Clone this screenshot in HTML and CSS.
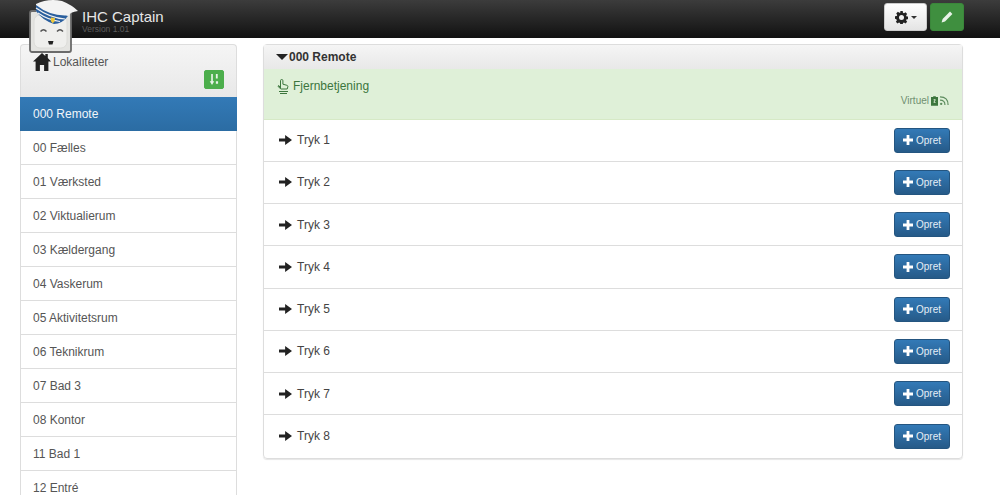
FILE: index.html
```html
<!DOCTYPE html>
<html lang="en">
<head>
    <meta charset="UTF-8">
    <title>IHC Captain</title>
    <link rel="stylesheet" href="styles.css">
</head>
<body>

<svg class="sprites" width="0" height="0">
    <symbol id="i-arrow" viewBox="0 0 14 12"><path d="M0 4.400h6.600V.6L14 6l-7.400 5.400V7.600H0z"/></symbol>
    <symbol id="i-plus" viewBox="0 0 10 10"><path d="M3.600 0h2.800v3.600H10v2.800H6.400V10H3.600V6.400H0V3.600h3.600z"/></symbol>
</svg>

<nav class="navbar">
    <div class="brand">
        <svg class="logo" viewBox="0 0 54 54" width="54" height="54">
            <rect x="2" y="11" width="41" height="41" rx="2" fill="#e4e4e1" stroke="#6b6b6b" stroke-width="1.800"/>
            <rect x="6" y="15" width="33" height="33" rx="6" fill="#efefed" stroke="#dcdcd9"/>
            <path d="M12.500 31.500q3-3.500 6 0M29 31.500q3-3.500 6 0" fill="none" stroke="#555" stroke-width="1.400"/>
            <path d="M20 41h5.500l-1 3.500h-3.500z" fill="#222"/>
            <path d="M8 4Q20-2 34 1q10 4 16 10-8 1-10 5-6 8-14 8Q14 20 8 11z" fill="#f3f3f3"/>
            <path d="M8 5q14 11 30 10.500l2 .5q-6 8-14 8Q14 20 8 11z" fill="#2b5f9e"/>
            <path d="M8 8q14 10 29 11M10 13q10 7 22 8.500" fill="none" stroke="#f3f3f3" stroke-width="1.200"/>
            <path d="M23 17.500l4 .5-.5 3.500-1.800 1.800-1.900-2.300z" fill="#f0c93c"/>
        </svg>
        <div class="brand-text">
            <span class="brand-name">IHC Captain</span>
            <span class="brand-version">Version 1.01</span>
        </div>
    </div>
    <div class="nav-buttons">
        <button class="btn-settings">
            <svg viewBox="0 0 14 14" width="13" height="13"><path fill="#222" fill-rule="evenodd" d="M5.700 0h2.600l.3 1.900 1.100.5 1.600-1.100 1.800 1.800-1.100 1.600.5 1.100 1.900.3v2.600l-1.900.3-.5 1.100 1.100 1.600-1.800 1.800-1.600-1.100-1.100.5-.3 1.900H5.700l-.3-1.900-1.100-.5-1.600 1.100-1.800-1.800 1.100-1.600-.5-1.100L0 8.300V5.700l1.900-.3.5-1.100L1.300 2.700l1.800-1.800 1.600 1.100 1.100-.5zM7 4.300a2.700 2.700 0 1 0 0 5.400 2.700 2.700 0 0 0 0-5.400z"/></svg>
            <span class="caret"></span>
        </button>
        <button class="btn-edit">
            <svg viewBox="0 0 12 12" width="12" height="12"><path fill="#e8f3e8" d="M9 .6l2.400 2.400L4 10.400.6 11.400 1.600 8z"/></svg>
        </button>
    </div>
</nav>

<div class="page">
    <aside class="sidebar">
        <div class="side-head">
            <div class="side-title">
                <svg viewBox="0 0 18 18" width="18" height="18"><path fill="#222" d="M9 0l3.300 2.900V1h2.500v4.100L18 8.500h-2.600V18h-4.300v-6H6.900v6H2.600V8.500H0z"/></svg>
                <span>Lokaliteter</span>
            </div>
            <button class="btn-sort">
                <svg viewBox="0 0 12 12" width="11" height="11"><path fill="#e8f3e8" d="M2.400 0h1.800v8h1.500L3.300 12 .8 8h1.600zM7.500 0h2v5h-2zM7.500 8h2.400v2.500H7.500z"/></svg>
            </button>
        </div>
        <ul class="rooms">
            <li class="active">000 Remote</li>
            <li>00 Fælles</li>
            <li>01 Værksted</li>
            <li>02 Viktualierum</li>
            <li>03 Kældergang</li>
            <li>04 Vaskerum</li>
            <li>05 Aktivitetsrum</li>
            <li>06 Teknikrum</li>
            <li>07 Bad 3</li>
            <li>08 Kontor</li>
            <li>11 Bad 1</li>
            <li>12 Entré</li>
        </ul>
    </aside>

    <main class="panel">
        <div class="panel-head">
            <span class="triangle"></span>
            <span>000 Remote</span>
        </div>
        <div class="device">
            <div class="device-name">
                <svg viewBox="0 0 14 15" width="14" height="15"><g fill="none" stroke="#3c763d" stroke-width="1"><path d="M4.500 9V1.700a1.200 1.200 0 0 1 2.400 0v3.500l4 1.100q1 .3 1 1.300l-.7 2.400H5L2.300 7.800q-.7-1 .5-1.300z"/><path d="M3 12.500h9M4 14.500h7"/></g></svg>
                <span>Fjernbetjening</span>
            </div>
            <div class="device-type">
                <span>Virtuel</span>
                <svg viewBox="0 0 8 11" width="7" height="10"><path fill="#3c763d" d="M2.500 0h3v1H8v10H0V1h2.500z"/><path fill="#dff0d8" d="M3 3.500h2.200v1.200L4 6.500h1.200v1H3V6.300l1.200-1.800H3z"/></svg>
                <svg viewBox="0 0 10 10" width="9" height="9"><g fill="none" stroke="#5d8c5e" stroke-width="1.300"><path d="M0 1q9 0 9 9"/><path d="M0 4.500q5.500 0 5.500 5.500"/></g><circle cx="1.300" cy="8.700" r="1.300" fill="#5d8c5e"/></svg>
            </div>
        </div>
        <div class="row"><div class="row-name"><svg class="arrow"><use href="#i-arrow"/></svg>Tryk 1</div><button class="btn-add"><svg class="plus"><use href="#i-plus"/></svg>Opret</button></div>
        <div class="row"><div class="row-name"><svg class="arrow"><use href="#i-arrow"/></svg>Tryk 2</div><button class="btn-add"><svg class="plus"><use href="#i-plus"/></svg>Opret</button></div>
        <div class="row"><div class="row-name"><svg class="arrow"><use href="#i-arrow"/></svg>Tryk 3</div><button class="btn-add"><svg class="plus"><use href="#i-plus"/></svg>Opret</button></div>
        <div class="row"><div class="row-name"><svg class="arrow"><use href="#i-arrow"/></svg>Tryk 4</div><button class="btn-add"><svg class="plus"><use href="#i-plus"/></svg>Opret</button></div>
        <div class="row"><div class="row-name"><svg class="arrow"><use href="#i-arrow"/></svg>Tryk 5</div><button class="btn-add"><svg class="plus"><use href="#i-plus"/></svg>Opret</button></div>
        <div class="row"><div class="row-name"><svg class="arrow"><use href="#i-arrow"/></svg>Tryk 6</div><button class="btn-add"><svg class="plus"><use href="#i-plus"/></svg>Opret</button></div>
        <div class="row"><div class="row-name"><svg class="arrow"><use href="#i-arrow"/></svg>Tryk 7</div><button class="btn-add"><svg class="plus"><use href="#i-plus"/></svg>Opret</button></div>
        <div class="row"><div class="row-name"><svg class="arrow"><use href="#i-arrow"/></svg>Tryk 8</div><button class="btn-add"><svg class="plus"><use href="#i-plus"/></svg>Opret</button></div>
    </main>
</div>

</body>
</html>
```

FILE: styles.css
```css
* {
    box-sizing: border-box;
}

html, body {
    margin: 0;
    padding: 0;
    height: 495px;
    overflow: hidden;
    background: #fff;
    color: #333;
    font-family: "Liberation Sans", Arial, sans-serif;
    font-size: 12px;
}

.sprites {
    position: absolute;
}

button {
    font-family: inherit;
    cursor: pointer;
}

/* Navbar */
.navbar {
    height: 38px;
    padding: 0 36px 0 82px;
    display: flex;
    justify-content: space-between;
    align-items: flex-start;
    background: linear-gradient(to bottom, #3c3c3c, #111);
}

.logo {
    position: absolute;
    top: 0;
    left: 28px;
    z-index: 5;
}

.brand-text {
    display: flex;
    flex-direction: column;
    padding-top: 9px;
}

.brand-name {
    color: #e6e6e6;
    font-size: 15px;
    line-height: 16px;
}

.brand-version {
    color: #5c5c5c;
    font-size: 8.500px;
    line-height: 9px;
}

.nav-buttons {
    display: flex;
    gap: 3px;
    padding-top: 3px;
}

.btn-settings {
    width: 43px;
    height: 28px;
    padding: 0;
    display: flex;
    align-items: center;
    justify-content: center;
    gap: 3px;
    background: linear-gradient(to bottom, #fff, #e4e4e4);
    border: 1px solid #ccc;
    border-radius: 3px;
}

.caret {
    border-top: 3px solid #333;
    border-left: 3px solid transparent;
    border-right: 3px solid transparent;
}

.btn-edit {
    width: 34px;
    height: 28px;
    padding: 0;
    display: flex;
    align-items: center;
    justify-content: center;
    background: #3f8f3f;
    border: 1px solid #3a873a;
    border-radius: 3px;
}

/* Page */
.page {
    display: flex;
    align-items: flex-start;
    gap: 26px;
    padding: 6px 0 0 20px;
}

/* Sidebar */
.sidebar {
    width: 217px;
    flex-shrink: 0;
}

.side-head {
    height: 53px;
    padding: 8px 12px 0 12px;
    background: linear-gradient(to bottom, #f5f5f5, #e8e8e8);
    border: 1px solid #ddd;
    border-bottom: none;
    border-radius: 4px 4px 0 0;
}

.side-title {
    display: flex;
    align-items: flex-start;
    gap: 2px;
    color: #555;
    line-height: 15px;
}

.side-title span {
    margin-top: 2px;
}

.btn-sort {
    display: flex;
    align-items: center;
    justify-content: center;
    width: 20px;
    height: 19px;
    padding: 0;
    margin: -1px 0 0 171px;
    background: #4cae4c;
    border: 1px solid #4cae4c;
    border-radius: 2px;
}

.rooms {
    list-style: none;
    margin: 0;
    padding: 0;
}

.rooms li {
    height: 34px;
    padding: 1px 0 0 12px;
    line-height: 33px;
    color: #555;
    border: 1px solid #ddd;
    border-width: 0 1px 1px;
}

.rooms li.active {
    padding-left: 13px;
    color: #f2f6fa;
    background: linear-gradient(to bottom, #337ab7, #2b6ca3);
    border: none;
}

/* Main panel */
.panel {
    width: 700px;
    border: 1px solid #ddd;
    border-radius: 4px;
    box-shadow: 0 1px 1px rgba(0, 0, 0, 0.1);
}

.panel-head {
    height: 24px;
    padding-left: 12px;
    display: flex;
    align-items: center;
    color: #333;
    font-weight: bold;
    background: linear-gradient(to bottom, #f5f5f5, #e8e8e8);
}

.triangle {
    border-top: 6px solid #222;
    border-left: 6px solid transparent;
    border-right: 6px solid transparent;
    margin-right: 1px;
}

.device {
    height: 50.500px;
    padding: 9px 13px 0 12px;
    background: #dff0d8;
    border-bottom: 1px solid #d6e9c6;
    color: #3c763d;
}

.device-name {
    display: flex;
    align-items: center;
    gap: 3px;
    line-height: 16px;
}

.device-type {
    display: flex;
    justify-content: flex-end;
    align-items: center;
    gap: 2px;
    margin-top: 1px;
    font-size: 10px;
    color: #6f8f70;
}

.row {
    height: 42.250px;
    padding: 0 12px 0 15px;
    display: flex;
    align-items: center;
    justify-content: space-between;
    border-bottom: 1px solid #ddd;
}

.row:last-child {
    border-bottom: none;
}

.row-name {
    display: flex;
    align-items: center;
    color: #444;
}

.arrow {
    width: 13px;
    height: 12px;
    margin-right: 5px;
    fill: #222;
}

.btn-add {
    width: 56px;
    height: 25px;
    padding: 0;
    display: flex;
    align-items: center;
    justify-content: center;
    gap: 3px;
    color: #e6eef6;
    font-size: 10px;
    background: linear-gradient(to bottom, #337ab7, #265a88);
    border: 1px solid #245580;
    border-radius: 3px;
}

.plus {
    width: 10px;
    height: 10px;
    fill: #fff;
}
```
